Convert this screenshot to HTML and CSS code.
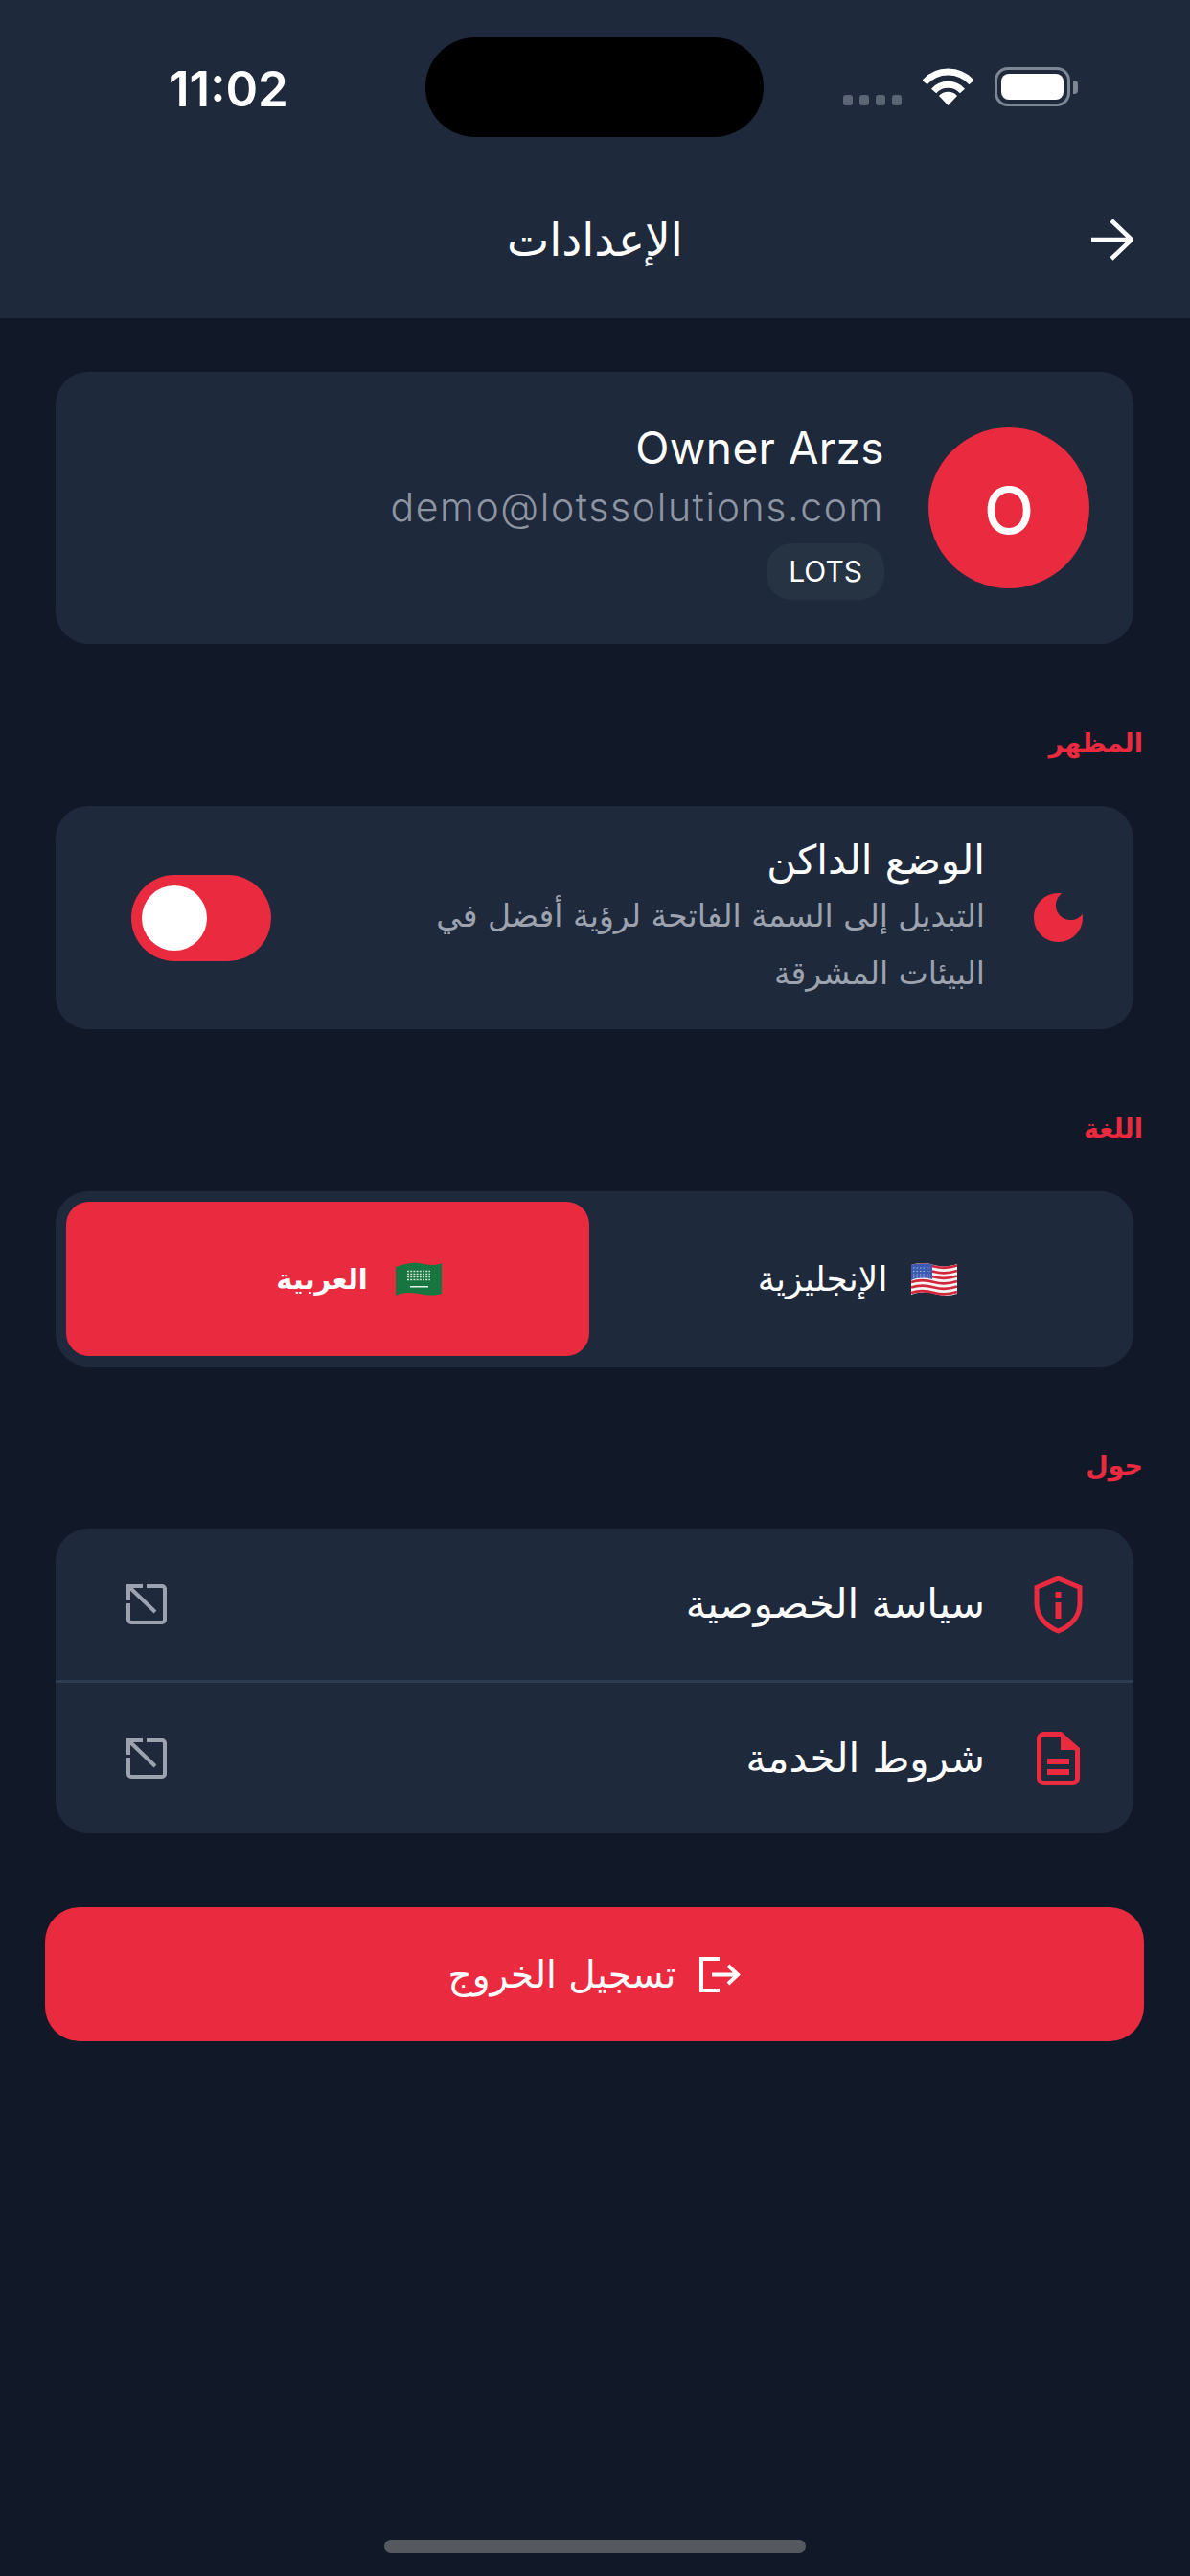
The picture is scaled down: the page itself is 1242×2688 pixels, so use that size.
FILE: index.html
```html
<!DOCTYPE html>
<html lang="ar" dir="rtl">
<head>
    <meta charset="UTF-8">
    <title>الإعدادات</title>
    <link rel="stylesheet" href="styles.css">
</head>
<body>
    <header class="top">
        <div class="status" dir="ltr">
            <span class="time">11:02</span>
            <div class="island"></div>
            <div class="dots"><i></i><i></i><i></i><i></i></div>
            <svg class="wifi" viewBox="0 0 53 40"><path d="M2 16A33 33 0 0 1 51 16" fill="none" stroke="#fff" stroke-width="7"/><path d="M11.6 25A20 20 0 0 1 41.4 25" fill="none" stroke="#fff" stroke-width="7"/><path d="M26.5 40L17 30A13 13 0 0 1 36 30Z" fill="#fff"/></svg>
            <div class="battery"><div class="charge"></div></div>
            <div class="nub"></div>
        </div>
        <div class="nav">
            <svg class="back" viewBox="0 0 44 44"><path d="M0 22H41M21 2L42 22L21 42" fill="none" stroke="#fff" stroke-width="4.5"/></svg>
            <h1 class="title">الإعدادات</h1>
        </div>
    </header>

    <main class="content">
        <section class="card profile">
            <div class="avatar">O</div>
            <div class="who">
                <div class="name" dir="ltr">Owner Arzs</div>
                <div class="email" dir="ltr">demo@lotssolutions.com</div>
                <span class="badge" dir="ltr">LOTS</span>
            </div>
        </section>

        <h2 class="label">المظهر</h2>
        <section class="card theme">
            <svg class="icon" viewBox="3 3 18 18"><path fill="#ea2a3f" d="M12 3c-4.97 0-9 4.03-9 9s4.03 9 9 9 9-4.03 9-9c0-.46-.04-.92-.1-1.36-.98 1.37-2.58 2.26-4.4 2.26-2.98 0-5.4-2.42-5.4-5.4 0-1.81.89-3.42 2.26-4.4-.44-.06-.9-.1-1.36-.1z"/></svg>
            <div class="theme-text">
                <div class="row-title">الوضع الداكن</div>
                <div class="row-desc">التبديل إلى السمة الفاتحة لرؤية أفضل في البيئات المشرقة</div>
            </div>
            <div class="toggle"><div class="knob"></div></div>
        </section>

        <h2 class="label">اللغة</h2>
        <section class="card langs">
            <div class="lang">
                <svg class="flag" viewBox="0 0 50 36">
                    <path d="M1 3C10 0 18 1 25 3S40 5 49 2V33C40 36 32 35 25 33S10 31 1 34Z" fill="#f4f4f4"/>
                    <g fill="none" stroke="#d3273b" stroke-width="2.6">
                        <path d="M1 4.500C10 1.500 18 2.500 25 4.500S40 6.500 49 3.500"/>
                        <path d="M1 10C10 7 18 8 25 10S40 12 49 9"/>
                        <path d="M1 15.500C10 12.500 18 13.500 25 15.500S40 17.500 49 14.500"/>
                        <path d="M1 21C10 18 18 19 25 21S40 23 49 20"/>
                        <path d="M1 26.500C10 23.500 18 24.500 25 26.500S40 28.500 49 25.500"/>
                        <path d="M1 32C10 29 18 30 25 32S40 34 49 31"/>
                    </g>
                    <path d="M1 3C8 1 15 1 23 2.500V18C15 16 8 16 1 19Z" fill="#3c5bb0"/>
                    <path d="M3 6H21M3 9.500H21M3 13H21M3 16H21" fill="none" stroke="#a9b8e4" stroke-width="1.200" stroke-dasharray="1.500 2"/>
                </svg>
                <span>الإنجليزية</span>
            </div>
            <div class="lang selected">
                <svg class="flag" viewBox="0 0 50 36">
                    <path d="M1 5C10 2 18 0 25 1S40 5 49 1V33C40 36 32 34 25 33S10 31 1 35Z" fill="#17763f"/>
                    <path d="M13 9.500H37M13 12.500H37M13 15.500H37M13 18.500H37" fill="none" stroke="#cfe3d5" stroke-width="1.600" stroke-dasharray="2 1.200"/>
                    <path d="M16 25H35V26.500H16Z" fill="#e8f2ea"/>
                </svg>
                <span>العربية</span>
            </div>
        </section>

        <h2 class="label">حول</h2>
        <section class="card links">
            <div class="link">
                <svg class="icon shield" viewBox="0 0 51 61"><path d="M25.500 3L48 12.500V29C48 43 38 53 25.500 58C13 53 3 43 3 29V12.500Z" fill="none" stroke="#ea2a3f" stroke-width="5"/><path d="M22.500 17H28.500V23H22.500ZM22.500 28H28.500V45H22.500Z" fill="#ea2a3f"/></svg>
                <span class="row-title">سياسة الخصوصية</span>
                <svg class="open" viewBox="0 0 42 42"><path d="M21 2H37A3 3 0 0 1 40 5V37A3 3 0 0 1 37 40H5A3 3 0 0 1 2 37V20M2 17V2H17M3 3L30 29" fill="none" stroke="#9ca3af" stroke-width="4"/></svg>
            </div>
            <div class="link">
                <svg class="icon doc" viewBox="0 0 45 56"><path d="M8 2.500H25L42.500 19V48.500A5 5 0 0 1 37.500 53.500H7.500A5 5 0 0 1 2.500 48.500V8A5 5 0 0 1 8 2.500Z" fill="none" stroke="#ea2a3f" stroke-width="5"/><path d="M25 0L45 17V19H25ZM11 28H34V34H11ZM11 39H34V45H11Z" fill="#ea2a3f"/></svg>
                <span class="row-title">شروط الخدمة</span>
                <svg class="open" viewBox="0 0 42 42"><path d="M21 2H37A3 3 0 0 1 40 5V37A3 3 0 0 1 37 40H5A3 3 0 0 1 2 37V20M2 17V2H17M3 3L30 29" fill="none" stroke="#9ca3af" stroke-width="4"/></svg>
            </div>
        </section>

        <button class="logout">
            <svg class="logout-icon" viewBox="0 0 43 37"><path d="M21 2H2V35H21M13 18.500H40M30 9L40 18.500L30 28" fill="none" stroke="#fff" stroke-width="4"/></svg>
            <span>تسجيل الخروج</span>
        </button>
    </main>

    <div class="home"></div>
</body>
</html>
```

FILE: styles.css
```css
* {
    box-sizing: border-box;
}
html, body {
    margin: 0;
    padding: 0;
}
body {
    width: 1242px;
    height: 2688px;
    background-color: #111827;
    color: #fff;
    font-family: "DejaVu Sans", sans-serif;
    overflow: hidden;
    position: relative;
}

/* top bar */
.top {
    height: 332px;
    background-color: #1e293b;
}
.status {
    height: 190px;
    padding: 39px 0 0 176px;
    display: flex;
    align-items: flex-start;
    font-family: Inter, sans-serif;
}
.time {
    width: 124px;
    margin: 24px 144px 0 0;
    font-size: 51px;
    line-height: 60px;
    font-weight: 600;
    white-space: nowrap;
}
.island {
    width: 353px;
    height: 104px;
    border-radius: 52px;
    background-color: #000;
    margin-right: 83px;
}
.dots {
    display: flex;
    gap: 7px;
    margin: 60px 22px 0 0;
}
.dots i {
    width: 10px;
    height: 11px;
    border-radius: 3px;
    background-color: #5b6573;
}
.wifi {
    width: 53px;
    height: 40px;
    margin: 31px 22px 0 0;
}
.battery {
    width: 79px;
    height: 41px;
    margin-top: 31px;
    padding: 4px;
    border: 3px solid #7d8794;
    border-radius: 14px;
}
.charge {
    width: 100%;
    height: 100%;
    background-color: #fff;
    border-radius: 8px;
}
.nub {
    width: 5px;
    height: 14px;
    margin: 45px 0 0 3px;
    background-color: #7d8794;
    border-radius: 0 4px 4px 0;
}
.nav {
    height: 120px;
    padding: 0 59px;
    display: grid;
    grid-template-columns: 1fr auto 1fr;
    align-items: center;
}
.back {
    width: 44px;
    height: 44px;
    grid-column: 1;
}
.title {
    grid-column: 2;
    margin: 0;
    font-size: 47px;
    font-weight: 400;
}

/* body */
.content {
    padding: 56px 59px 0 58px;
}
.card {
    background-color: #1e293b;
    border-radius: 34px;
}
.label {
    margin: 84px -10px 45px 0;
    height: 40px;
    line-height: 40px;
    font-size: 27px;
    font-weight: 700;
    color: #ea2a3f;
}

.profile {
    height: 284px;
    padding: 0 46px;
    display: flex;
    align-items: center;
    gap: 46px;
}
.avatar {
    width: 168px;
    height: 168px;
    border-radius: 50%;
    background-color: #ea2a3f;
    display: flex;
    align-items: center;
    justify-content: center;
    padding-top: 4px;
    font-family: Inter, sans-serif;
    font-size: 68px;
    font-weight: 500;
}
.who {
    font-family: Inter, sans-serif;
    margin-top: 2px;
}
.name {
    font-size: 46px;
    line-height: 60px;
    letter-spacing: 0.4px;
    text-align: right;
}
.email {
    font-size: 41px;
    line-height: 56px;
    margin-top: 4px;
    letter-spacing: 1.6px;
    font-weight: 300;
    color: #8e95a2;
    text-align: right;
}
.badge {
    display: inline-block;
    margin-top: 10px;
    height: 59px;
    padding: 0 23px;
    line-height: 59px;
    font-size: 30px;
    border-radius: 26px;
    background-color: #263343;
}

.theme {
    height: 233px;
    padding: 0 53px 0 79px;
    display: flex;
    align-items: center;
}
.icon {
    width: 51px;
    flex-shrink: 0;
}
.theme .icon {
    height: 51px;
    margin-left: 51px;
}
.theme-text {
    width: 620px;
}
.row-title {
    font-size: 42px;
    line-height: 56px;
}
.row-desc {
    font-size: 33px;
    line-height: 60px;
    color: #9ca3af;
}
.toggle {
    width: 146px;
    height: 90px;
    margin-right: auto;
    padding: 11px;
    border-radius: 45px;
    background-color: #ea2a3f;
    display: flex;
    justify-content: flex-end;
}
.knob {
    width: 68px;
    height: 68px;
    border-radius: 50%;
    background-color: #fff;
}

.langs {
    height: 183px;
    padding: 11px;
    display: flex;
}
.lang {
    width: 557px;
    padding-left: 4px;
    display: flex;
    align-items: center;
    justify-content: center;
    gap: 24px;
    font-size: 36px;
}
.lang.selected {
    width: 546px;
    padding-left: 66px;
    gap: 28px;
    background-color: #ea2a3f;
    border-radius: 24px;
    font-size: 29px;
    font-weight: 700;
}
.flag {
    width: 50px;
    height: 36px;
}

.links {
    height: 318px;
}
.link {
    height: 158px;
    padding: 0 53px 0 0;
    display: flex;
    align-items: center;
}
.link + .link {
    height: 160px;
    border-top: 3px solid #2c3c52;
}
.shield {
    height: 61px;
    margin-left: 51px;
}
.doc {
    width: 45px;
    height: 56px;
    margin: 0 3px 0 54px;
}
.open {
    width: 42px;
    height: 42px;
    margin: 0 auto 0 74px;
}

.logout {
    width: 1147px;
    height: 140px;
    margin: 77px -11px 0 0;
    border: 0;
    border-radius: 36px;
    background-color: #ea2a3f;
    color: #fff;
    font-family: "DejaVu Sans", sans-serif;
    font-size: 39px;
    display: flex;
    align-items: center;
    justify-content: center;
    gap: 25px;
}
.logout-icon {
    width: 43px;
    height: 37px;
}

.home {
    position: absolute;
    left: 401px;
    top: 2650px;
    width: 440px;
    height: 14px;
    border-radius: 7px;
    background-color: #55595f;
}
```
